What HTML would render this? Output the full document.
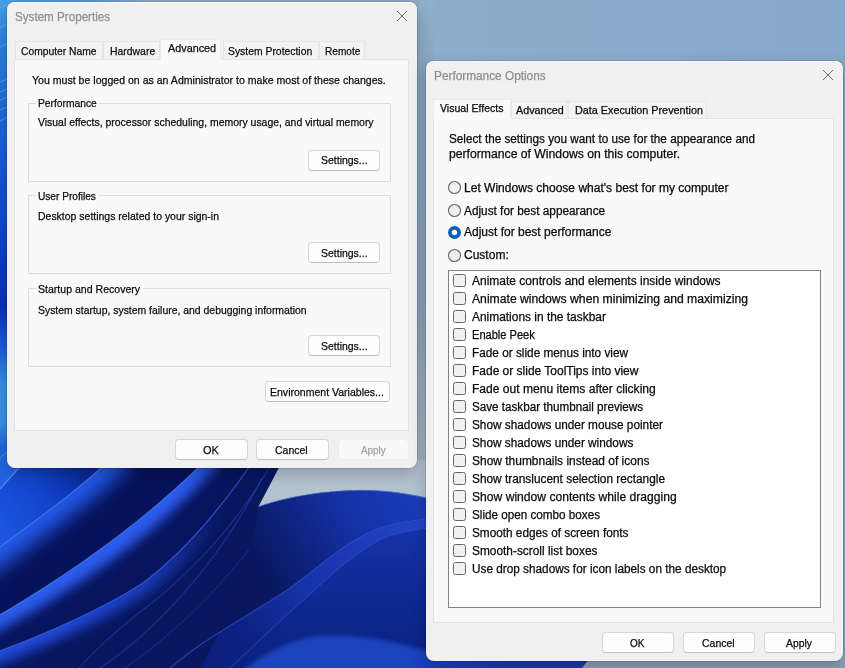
<!DOCTYPE html>
<html><head><meta charset="utf-8"><style>
html,body{margin:0;padding:0;}
body{width:845px;height:668px;overflow:hidden;position:relative;font-family:"Liberation Sans",sans-serif;background:#8db2d2;}
.t{position:absolute;white-space:nowrap;-webkit-text-stroke:0.25px currentColor;}
.b{position:absolute;}
#wall{position:absolute;left:0;top:0;}
</style></head><body>
<svg id="wall" width="845" height="668" viewBox="0 0 845 668">
<defs>
<linearGradient id="sky" x1="0" y1="0" x2="1" y2="0"><stop offset="0" stop-color="#92b3d0"/><stop offset="1" stop-color="#86a9ca"/></linearGradient>
<linearGradient id="skyV" x1="0" y1="0" x2="0" y2="668" gradientUnits="userSpaceOnUse"><stop offset="0" stop-color="#8fb0cc"/><stop offset="0.12" stop-color="#88a6c2"/><stop offset="0.45" stop-color="#8ea6bd"/><stop offset="0.7" stop-color="#a8b8c8"/><stop offset="1" stop-color="#b4c2d0"/></linearGradient>
<linearGradient id="ls" x1="0" y1="0" x2="0" y2="480" gradientUnits="userSpaceOnUse">
 <stop offset="0" stop-color="#40a4ea"/><stop offset="0.1" stop-color="#2a80e0"/><stop offset="0.3" stop-color="#1a60d8"/>
 <stop offset="0.5" stop-color="#0f44cc"/><stop offset="0.64" stop-color="#0a30b4"/><stop offset="0.72" stop-color="#1a5cd8"/>
 <stop offset="0.8" stop-color="#3590e8"/><stop offset="0.88" stop-color="#3a92ea"/><stop offset="0.93" stop-color="#1e66dc"/><stop offset="1" stop-color="#2a70e0"/></linearGradient>
<linearGradient id="b2" x1="0" y1="530" x2="90" y2="468" gradientUnits="userSpaceOnUse"><stop offset="0" stop-color="#1a56de"/><stop offset="0.5" stop-color="#1244cc"/><stop offset="1" stop-color="#0a2590"/></linearGradient>
<linearGradient id="p1" x1="410" y1="495" x2="262" y2="575" gradientUnits="userSpaceOnUse"><stop offset="0" stop-color="#1a3cb8"/><stop offset="0.4" stop-color="#1430a4"/><stop offset="1" stop-color="#08175e"/></linearGradient>
<linearGradient id="p2" x1="400" y1="520" x2="250" y2="650" gradientUnits="userSpaceOnUse"><stop offset="0" stop-color="#2242c2"/><stop offset="0.6" stop-color="#1632a8"/><stop offset="1" stop-color="#0c2080"/></linearGradient>
<linearGradient id="p3" x1="400" y1="530" x2="400" y2="668" gradientUnits="userSpaceOnUse"><stop offset="0" stop-color="#1632a8"/><stop offset="0.5" stop-color="#0e2a92"/><stop offset="1" stop-color="#0a2080"/></linearGradient>
<filter id="bl9" x="-50%" y="-50%" width="200%" height="200%"><feGaussianBlur stdDeviation="9"/></filter>
<filter id="bl6" x="-50%" y="-50%" width="200%" height="200%"><feGaussianBlur stdDeviation="6"/></filter>
<filter id="bl2" x="-50%" y="-50%" width="200%" height="200%"><feGaussianBlur stdDeviation="2"/></filter>
<filter id="bl4" x="-50%" y="-50%" width="200%" height="200%"><feGaussianBlur stdDeviation="4"/></filter>
<filter id="bl10" x="-50%" y="-50%" width="200%" height="200%"><feGaussianBlur stdDeviation="10"/></filter>
<clipPath id="cR3"><path d="M110 460 H206 C170 496 110 550 0 615 V547 C36 520 72 495 110 460 Z"/></clipPath>
<clipPath id="cR4"><path d="M206 460 H254 C220 510 180 556 140 585 C100 610 50 632 0 651 V615 C110 550 170 496 206 460 Z"/></clipPath>
<clipPath id="cR5"><path d="M0 651 C50 632 100 610 140 585 C180 556 220 510 254 460 H270 C240 520 190 575 140 612 C115 632 95 650 79 668 H0 Z"/></clipPath>
<clipPath id="cP"><path d="M258.5 506.6 C292 495 335 488.5 378 490.7 C400 492 415 495 440 501 V668 H200 C230 620 250 560 258.5 506.6 Z"/></clipPath>
</defs>
<rect width="845" height="668" fill="url(#sky)"/>
<rect x="405" y="0" width="30" height="668" fill="url(#skyV)"/>
<rect x="0" y="0" width="14" height="480" fill="url(#ls)"/>
<linearGradient id="ts" x1="0" y1="0" x2="150" y2="0" gradientUnits="userSpaceOnUse"><stop offset="0" stop-color="#48a0e6"/><stop offset="0.6" stop-color="#5a9ad8"/><stop offset="1" stop-color="#8eaac6"/></linearGradient>
<rect x="0" y="0" width="420" height="6" fill="#8eaac6"/>
<rect x="0" y="0" width="150" height="6" fill="url(#ts)"/>
<g stroke="#7ab8f0" stroke-width="1" opacity="0.55" fill="none">
<path d="M0 8 L14 2"/><path d="M0 28 L14 20"/><path d="M0 47 L14 40"/><path d="M0 82 L14 76"/><path d="M0 92 L14 86"/><path d="M0 100 L14 95"/><path d="M0 110 L14 104"/><path d="M0 121 L14 114"/>
<path d="M0 458 L14 446"/>
</g>
<path d="M250 460 H440 V520 H250 Z" fill="#b4c2d0"/>
<!-- bottom-left base navy -->
<path d="M0 460 H283 L258.5 506.6 C292 495 335 488.5 378 490.7 C400 492 415 495 440 501 L440 668 H0 Z" fill="#08175e"/>
<path d="M0 460 H26 L0 489 Z" fill="#2064e4"/>
<path d="M26 460 H110 C72 495 36 520 0 547 V489 Z" fill="url(#b2)"/>
<g clip-path="url(#cR3)"><rect x="0" y="450" width="260" height="200" fill="#06125a"/>
 <path d="M-20 562 C36 520 72 495 120 452" stroke="#2458e8" stroke-width="34" fill="none" filter="url(#bl9)"/></g>
<g clip-path="url(#cR4)"><rect x="0" y="450" width="280" height="230" fill="#07145e"/>
 <path d="M-20 626 C110 556 170 500 212 452" stroke="#2a5cec" stroke-width="26" fill="none" filter="url(#bl6)"/></g>
<g clip-path="url(#cR5)"><rect x="0" y="450" width="280" height="230" fill="#08165e"/>
 <linearGradient id="e4g" x1="60" y1="630" x2="220" y2="510" gradientUnits="userSpaceOnUse"><stop offset="0" stop-color="#2048d8"/><stop offset="0.5" stop-color="#2048d8" stop-opacity="0.7"/><stop offset="1" stop-color="#2048d8" stop-opacity="0"/></linearGradient>
 <path d="M-20 660 C50 632 100 610 140 585 C180 556 220 510 256 456" stroke="url(#e4g)" stroke-width="22" fill="none" filter="url(#bl6)"/></g>
<!-- lower-left lighter region -->
<!-- highlight lines -->
<path d="M0 489 L26 460" stroke="#5a9af0" stroke-width="1.2" fill="none" opacity="0.8"/>
<path d="M0 547 C36 520 72 495 110 460" stroke="#4a82f0" stroke-width="1.2" fill="none" opacity="0.8"/>
<path d="M0 615 C110 550 170 496 206 460" stroke="#4a7cf0" stroke-width="1.2" fill="none" opacity="0.8"/>
<path d="M0 651 C50 632 100 610 140 585 C180 556 220 510 254 460" stroke="#3a60e0" stroke-width="1.2" fill="none" opacity="0.8"/>
<path d="M79 668 C95 650 115 632 140 612 C190 575 240 520 270 466" stroke="#2448c8" stroke-width="1" fill="none" opacity="0.7"/>
<path d="M125 668 C180 630 240 570 284 500" stroke="#2040c0" stroke-width="1" fill="none" opacity="0.6"/>
<path d="M100 668 C150 635 215 570 262 478" stroke="#2444c4" stroke-width="1.2" fill="none" opacity="0.55"/>
<!-- petal 1 -->
<g clip-path="url(#cP)">
<rect x="190" y="480" width="260" height="200" fill="url(#p1)"/>
<!-- petal 2 band -->
<path d="M170 668 C180 660 190 652 200 645 C230 625 265 605 290 588 C315 570 335 552 350 543 C365 534 375 529 386 526 C400 522 415 520 440 518 V668 Z" fill="url(#p2)"/>
<path d="M230 668 C255 645 275 625 290 612 C310 595 330 575 344 564 C360 552 372 543 386 537 C400 532 415 529 440 527 V668 Z" fill="url(#p3)"/>
<path d="M245 668 C270 650 295 638 320 636 C360 633 400 642 440 655 V672 H245 Z" fill="#1a42bc" filter="url(#bl2)"/>
</g>
<path d="M258.5 506.6 C292 495 335 488.5 378 490.7 C400 492 415 495 440 501" stroke="#6a88d8" stroke-width="1.2" fill="none" opacity="0.6"/>
<path d="M170 668 C180 660 190 652 200 645 C230 625 265 605 290 588 C315 570 335 552 350 543 C365 534 375 529 386 526 C400 522 415 520 440 518" stroke="#3050cc" stroke-width="1.2" fill="none" opacity="0.7"/>
<path d="M230 668 C255 645 275 625 290 612 C310 595 330 575 344 564 C360 552 372 543 386 537 C400 532 415 529 440 527" stroke="#3656d4" stroke-width="1" fill="none" opacity="0.6"/>
<!-- bottom strip under right window -->
<rect x="560" y="640" width="285" height="28" fill="#8aa0b8"/>
<rect x="840" y="60" width="5" height="608" fill="#8ea4ba"/>
<linearGradient id="bs" x1="425" y1="0" x2="585" y2="0" gradientUnits="userSpaceOnUse"><stop offset="0" stop-color="#1a40c0"/><stop offset="0.5" stop-color="#1a3ab0"/><stop offset="1" stop-color="#1a3aa8"/></linearGradient>
<path d="M420 655 H592 L582 668 H420 Z" fill="url(#bs)"/>
</svg>

<div class="b" style="left:7px;top:2px;width:410.00px;height:466.00px;background:#f0f0f0;border-radius:8px;box-shadow:inset 0 1px 0 rgba(255,255,255,0.9),0 0 0 1px rgba(0,0,0,0.10),0 6px 16px rgba(0,0,0,0.22);"></div>
<div class="t" style="left:15.35px;top:7.81px;font-size:12.5px;line-height:18px;color:#8e8e8e;letter-spacing:0.000px;transform:scaleX(0.9312);transform-origin:0 0">System Properties</div>
<svg class="b" style="left:396px;top:10px" width="12" height="12"><path d="M1 1L11 11M11 1L1 11" stroke="#6e6e6e" stroke-width="1"/></svg>
<div class="b" style="left:15px;top:41px;width:88.00px;height:19.00px;background:#f3f3f3;border:1px solid #e5e5e5;border-bottom:none;box-sizing:border-box;"></div>
<div class="t" style="left:20.82px;top:42.75px;font-size:11.75px;line-height:16px;color:#0a0a0a;letter-spacing:0.000px;transform:scaleX(0.8763);transform-origin:0 0">Computer Name</div>
<div class="b" style="left:103px;top:41px;width:57.00px;height:19.00px;background:#f3f3f3;border:1px solid #e5e5e5;border-bottom:none;box-sizing:border-box;"></div>
<div class="t" style="left:109.50px;top:42.75px;font-size:11.75px;line-height:16px;color:#0a0a0a;letter-spacing:0.000px;transform:scaleX(0.8869);transform-origin:0 0">Hardware</div>
<div class="b" style="left:223px;top:41px;width:95.50px;height:19.00px;background:#f3f3f3;border:1px solid #e5e5e5;border-bottom:none;box-sizing:border-box;"></div>
<div class="t" style="left:228.00px;top:42.75px;font-size:11.75px;line-height:16px;color:#0a0a0a;letter-spacing:0.000px;transform:scaleX(0.8831);transform-origin:0 0">System Protection</div>
<div class="b" style="left:318.5px;top:41px;width:46.50px;height:19.00px;background:#f3f3f3;border:1px solid #e5e5e5;border-bottom:none;box-sizing:border-box;"></div>
<div class="t" style="left:325.36px;top:42.75px;font-size:11.75px;line-height:16px;color:#0a0a0a;letter-spacing:0.000px;transform:scaleX(0.8601);transform-origin:0 0">Remote</div>
<div class="b" style="left:14px;top:59px;width:395.00px;height:372.00px;background:#f9f9f9;border:1px solid #e3e3e3;box-sizing:border-box;"></div>
<div class="b" style="left:160px;top:39px;width:61.00px;height:21.00px;background:#f9f9f9;border:1px solid #ebebeb;border-bottom:none;box-sizing:border-box;"></div>
<div class="t" style="left:167.50px;top:40.43px;font-size:11.75px;line-height:16px;color:#0a0a0a;letter-spacing:0.000px;transform:scaleX(0.9205);transform-origin:0 0">Advanced</div>
<div class="t" style="left:32.36px;top:72.29px;font-size:11.75px;line-height:16px;color:#0a0a0a;letter-spacing:0.000px;transform:scaleX(0.8992);transform-origin:0 0">You must be logged on as an Administrator to make most of these changes.</div>
<div class="b" style="left:28px;top:103px;width:363.00px;height:79.00px;border:1px solid #dcdcdc;box-sizing:border-box;border-radius:1px;"></div>
<div class="t" style="left:37.64px;top:95.43px;font-size:11.75px;line-height:16px;color:#0a0a0a;letter-spacing:0.000px;transform:scaleX(0.8733);transform-origin:0 0"><span style="background:#f9f9f9;padding:0 3px 0 2px;margin-left:-2px">Performance</span></div>
<div class="t" style="left:38.32px;top:114.43px;font-size:11.75px;line-height:16px;color:#0a0a0a;letter-spacing:0.000px;transform:scaleX(0.8885);transform-origin:0 0">Visual effects, processor scheduling, memory usage, and virtual memory</div>
<div class="b" style="left:308.3px;top:150.1px;width:71.30px;height:21.00px;background:#fdfdfd;border:1px solid #d6d6d6;border-bottom-color:#bdbdbd;border-radius:4px;box-sizing:border-box;"></div>
<div class="t" style="left:320.64px;top:152.29px;font-size:11.75px;line-height:16px;color:#0a0a0a;letter-spacing:0.000px;transform:scaleX(0.8915);transform-origin:0 0">Settings...</div>
<div class="b" style="left:28px;top:195px;width:363.00px;height:79.00px;border:1px solid #dcdcdc;box-sizing:border-box;border-radius:1px;"></div>
<div class="t" style="left:37.82px;top:188.25px;font-size:11.75px;line-height:16px;color:#0a0a0a;letter-spacing:0.000px;transform:scaleX(0.8605);transform-origin:0 0"><span style="background:#f9f9f9;padding:0 3px 0 2px;margin-left:-2px">User Profiles</span></div>
<div class="t" style="left:38.18px;top:208.11px;font-size:11.75px;line-height:16px;color:#0a0a0a;letter-spacing:0.000px;transform:scaleX(0.8911);transform-origin:0 0">Desktop settings related to your sign-in</div>
<div class="b" style="left:308.3px;top:242.1px;width:71.30px;height:21.00px;background:#fdfdfd;border:1px solid #d6d6d6;border-bottom-color:#bdbdbd;border-radius:4px;box-sizing:border-box;"></div>
<div class="t" style="left:320.64px;top:244.61px;font-size:11.75px;line-height:16px;color:#0a0a0a;letter-spacing:0.000px;transform:scaleX(0.8915);transform-origin:0 0">Settings...</div>
<div class="b" style="left:28px;top:288px;width:363.00px;height:79.00px;border:1px solid #dcdcdc;box-sizing:border-box;border-radius:1px;"></div>
<div class="t" style="left:37.82px;top:281.11px;font-size:11.75px;line-height:16px;color:#0a0a0a;letter-spacing:0.000px;transform:scaleX(0.8983);transform-origin:0 0"><span style="background:#f9f9f9;padding:0 3px 0 2px;margin-left:-2px">Startup and Recovery</span></div>
<div class="t" style="left:38.18px;top:301.57px;font-size:11.75px;line-height:16px;color:#0a0a0a;letter-spacing:0.000px;transform:scaleX(0.8864);transform-origin:0 0">System startup, system failure, and debugging information</div>
<div class="b" style="left:308.3px;top:335.1px;width:71.30px;height:21.00px;background:#fdfdfd;border:1px solid #d6d6d6;border-bottom-color:#bdbdbd;border-radius:4px;box-sizing:border-box;"></div>
<div class="t" style="left:320.64px;top:337.93px;font-size:11.75px;line-height:16px;color:#0a0a0a;letter-spacing:0.000px;transform:scaleX(0.8915);transform-origin:0 0">Settings...</div>
<div class="b" style="left:264.6px;top:381.2px;width:125.20px;height:21.00px;background:#fdfdfd;border:1px solid #d6d6d6;border-bottom-color:#bdbdbd;border-radius:4px;box-sizing:border-box;"></div>
<div class="t" style="left:270.00px;top:384.25px;font-size:11.75px;line-height:16px;color:#0a0a0a;letter-spacing:0.000px;transform:scaleX(0.8957);transform-origin:0 0">Environment Variables...</div>
<div class="b" style="left:175px;top:439px;width:72.60px;height:21.00px;background:#fdfdfd;border:1px solid #d6d6d6;border-bottom-color:#bdbdbd;border-radius:4px;box-sizing:border-box;"></div>
<div class="t" style="left:203.32px;top:441.79px;font-size:11.75px;line-height:16px;color:#0a0a0a;letter-spacing:0.000px;transform:scaleX(0.9355);transform-origin:0 0">OK</div>
<div class="b" style="left:256.4px;top:439px;width:72.20px;height:21.00px;background:#fdfdfd;border:1px solid #d6d6d6;border-bottom-color:#bdbdbd;border-radius:4px;box-sizing:border-box;"></div>
<div class="t" style="left:275.36px;top:442.39px;font-size:11.75px;line-height:16px;color:#0a0a0a;letter-spacing:0.000px;transform:scaleX(0.8915);transform-origin:0 0">Cancel</div>
<div class="b" style="left:337.5px;top:439px;width:71.00px;height:21.00px;background:#f9f9f9;border:1px solid #ededed;border-radius:4px;box-sizing:border-box;"></div>
<div class="t" style="left:360.64px;top:441.79px;font-size:11.75px;line-height:16px;color:#a0a0a0;letter-spacing:0.000px;transform:scaleX(0.8394);transform-origin:0 0">Apply</div>
<div class="b" style="left:426px;top:61px;width:417.00px;height:600.00px;background:#f0f0f0;border-radius:8px;box-shadow:inset 0 1px 0 rgba(255,255,255,0.9),0 0 0 1px rgba(0,0,0,0.10),0 6px 16px rgba(0,0,0,0.22);"></div>
<div class="t" style="left:433.62px;top:67.68px;font-size:12.25px;line-height:17px;color:#8e8e8e;letter-spacing:0.000px;transform:scaleX(0.9648);transform-origin:0 0">Performance Options</div>
<svg class="b" style="left:822px;top:69px" width="12" height="12"><path d="M1 1L11 11M11 1L1 11" stroke="#6e6e6e" stroke-width="1"/></svg>
<div class="b" style="left:511px;top:101px;width:57.40px;height:18.00px;background:#f3f3f3;border:1px solid #e5e5e5;border-bottom:none;box-sizing:border-box;"></div>
<div class="t" style="left:515.54px;top:102.69px;font-size:11px;line-height:15px;color:#0a0a0a;letter-spacing:0.000px;transform:scaleX(0.9767);transform-origin:0 0">Advanced</div>
<div class="b" style="left:568.4px;top:101px;width:139.00px;height:18.00px;background:#f3f3f3;border:1px solid #e5e5e5;border-bottom:none;box-sizing:border-box;"></div>
<div class="t" style="left:575.18px;top:102.69px;font-size:11px;line-height:15px;color:#0a0a0a;letter-spacing:0.000px;transform:scaleX(0.9827);transform-origin:0 0">Data Execution Prevention</div>
<div class="b" style="left:433px;top:118.3px;width:401.00px;height:505.00px;background:#f9f9f9;border:1px solid #e3e3e3;box-sizing:border-box;"></div>
<div class="b" style="left:433px;top:99px;width:78.00px;height:20.30px;background:#f9f9f9;border:1px solid #ebebeb;border-bottom:none;box-sizing:border-box;"></div>
<div class="t" style="left:439.82px;top:100.83px;font-size:11px;line-height:15px;color:#0a0a0a;letter-spacing:0.000px;transform:scaleX(0.9587);transform-origin:0 0">Visual Effects</div>
<div class="t" style="left:448.64px;top:131.26px;font-size:12px;line-height:17px;color:#0a0a0a;letter-spacing:0.000px;transform:scaleX(0.9780);transform-origin:0 0">Select the settings you want to use for the appearance and</div>
<div class="t" style="left:448.64px;top:146.40px;font-size:12px;line-height:17px;color:#0a0a0a;letter-spacing:0.000px;transform:scaleX(1.0158);transform-origin:0 0">performance of Windows on this computer.</div>
<svg class="b" style="left:447px;top:180.0px" width="15" height="15"><circle cx="7.5" cy="7.5" r="6" fill="#f0f0f0" stroke="#666666" stroke-width="1.1"/></svg>
<div class="t" style="left:464.36px;top:179.76px;font-size:12px;line-height:17px;color:#0a0a0a;letter-spacing:0.000px;transform:scaleX(1.0029);transform-origin:0 0">Let Windows choose what's best for my computer</div>
<svg class="b" style="left:447px;top:203.0px" width="15" height="15"><circle cx="7.5" cy="7.5" r="6" fill="#f0f0f0" stroke="#666666" stroke-width="1.1"/></svg>
<div class="t" style="left:464.36px;top:202.76px;font-size:12px;line-height:17px;color:#0a0a0a;letter-spacing:0.000px;transform:scaleX(0.9840);transform-origin:0 0">Adjust for best appearance</div>
<svg class="b" style="left:447px;top:225.0px" width="15" height="15"><circle cx="7.5" cy="7.5" r="6.5" fill="#0a5fb4"/><circle cx="7.5" cy="7.5" r="2.7" fill="#fff"/></svg>
<div class="t" style="left:464.36px;top:224.44px;font-size:12px;line-height:17px;color:#0a0a0a;letter-spacing:0.000px;transform:scaleX(0.9999);transform-origin:0 0">Adjust for best performance</div>
<svg class="b" style="left:447px;top:247.9px" width="15" height="15"><circle cx="7.5" cy="7.5" r="6" fill="#f0f0f0" stroke="#666666" stroke-width="1.1"/></svg>
<div class="t" style="left:464.36px;top:247.30px;font-size:12px;line-height:17px;color:#0a0a0a;letter-spacing:0.000px;transform:scaleX(1.0015);transform-origin:0 0">Custom:</div>
<div class="b" style="left:448.3px;top:270.2px;width:372.50px;height:337.80px;background:#fff;border:1px solid #828282;box-sizing:border-box;"></div>
<div class="b" style="left:453.4px;top:274.3px;width:12.60px;height:12.30px;background:#f0f0f0;border:1px solid #666666;border-radius:2.5px;box-sizing:border-box;"></div>
<div class="t" style="left:471.50px;top:273.24px;font-size:12px;line-height:17px;color:#0a0a0a;letter-spacing:0.000px;transform:scaleX(0.9993);transform-origin:0 0">Animate controls and elements inside windows</div>
<div class="b" style="left:453.4px;top:292.3px;width:12.60px;height:12.30px;background:#f0f0f0;border:1px solid #666666;border-radius:2.5px;box-sizing:border-box;"></div>
<div class="t" style="left:471.50px;top:291.24px;font-size:12px;line-height:17px;color:#0a0a0a;letter-spacing:0.000px;transform:scaleX(1.0142);transform-origin:0 0">Animate windows when minimizing and maximizing</div>
<div class="b" style="left:453.4px;top:310.3px;width:12.60px;height:12.30px;background:#f0f0f0;border:1px solid #666666;border-radius:2.5px;box-sizing:border-box;"></div>
<div class="t" style="left:471.50px;top:309.24px;font-size:12px;line-height:17px;color:#0a0a0a;letter-spacing:0.000px;transform:scaleX(0.9939);transform-origin:0 0">Animations in the taskbar</div>
<div class="b" style="left:453.4px;top:328.3px;width:12.60px;height:12.30px;background:#f0f0f0;border:1px solid #666666;border-radius:2.5px;box-sizing:border-box;"></div>
<div class="t" style="left:471.50px;top:327.24px;font-size:12px;line-height:17px;color:#0a0a0a;letter-spacing:0.000px;transform:scaleX(0.9229);transform-origin:0 0">Enable Peek</div>
<div class="b" style="left:453.4px;top:346.3px;width:12.60px;height:12.30px;background:#f0f0f0;border:1px solid #666666;border-radius:2.5px;box-sizing:border-box;"></div>
<div class="t" style="left:471.50px;top:345.24px;font-size:12px;line-height:17px;color:#0a0a0a;letter-spacing:0.000px;transform:scaleX(0.9830);transform-origin:0 0">Fade or slide menus into view</div>
<div class="b" style="left:453.4px;top:364.3px;width:12.60px;height:12.30px;background:#f0f0f0;border:1px solid #666666;border-radius:2.5px;box-sizing:border-box;"></div>
<div class="t" style="left:471.50px;top:363.24px;font-size:12px;line-height:17px;color:#0a0a0a;letter-spacing:0.000px;transform:scaleX(0.9979);transform-origin:0 0">Fade or slide ToolTips into view</div>
<div class="b" style="left:453.4px;top:382.3px;width:12.60px;height:12.30px;background:#f0f0f0;border:1px solid #666666;border-radius:2.5px;box-sizing:border-box;"></div>
<div class="t" style="left:471.50px;top:381.24px;font-size:12px;line-height:17px;color:#0a0a0a;letter-spacing:0.000px;transform:scaleX(1.0055);transform-origin:0 0">Fade out menu items after clicking</div>
<div class="b" style="left:453.4px;top:400.3px;width:12.60px;height:12.30px;background:#f0f0f0;border:1px solid #666666;border-radius:2.5px;box-sizing:border-box;"></div>
<div class="t" style="left:471.50px;top:399.24px;font-size:12px;line-height:17px;color:#0a0a0a;letter-spacing:0.000px;transform:scaleX(0.9717);transform-origin:0 0">Save taskbar thumbnail previews</div>
<div class="b" style="left:453.4px;top:418.3px;width:12.60px;height:12.30px;background:#f0f0f0;border:1px solid #666666;border-radius:2.5px;box-sizing:border-box;"></div>
<div class="t" style="left:471.50px;top:417.24px;font-size:12px;line-height:17px;color:#0a0a0a;letter-spacing:0.000px;transform:scaleX(0.9835);transform-origin:0 0">Show shadows under mouse pointer</div>
<div class="b" style="left:453.4px;top:436.3px;width:12.60px;height:12.30px;background:#f0f0f0;border:1px solid #666666;border-radius:2.5px;box-sizing:border-box;"></div>
<div class="t" style="left:471.50px;top:435.24px;font-size:12px;line-height:17px;color:#0a0a0a;letter-spacing:0.000px;transform:scaleX(0.9832);transform-origin:0 0">Show shadows under windows</div>
<div class="b" style="left:453.4px;top:454.3px;width:12.60px;height:12.30px;background:#f0f0f0;border:1px solid #666666;border-radius:2.5px;box-sizing:border-box;"></div>
<div class="t" style="left:471.50px;top:453.24px;font-size:12px;line-height:17px;color:#0a0a0a;letter-spacing:0.000px;transform:scaleX(0.9969);transform-origin:0 0">Show thumbnails instead of icons</div>
<div class="b" style="left:453.4px;top:472.3px;width:12.60px;height:12.30px;background:#f0f0f0;border:1px solid #666666;border-radius:2.5px;box-sizing:border-box;"></div>
<div class="t" style="left:471.50px;top:471.24px;font-size:12px;line-height:17px;color:#0a0a0a;letter-spacing:0.000px;transform:scaleX(0.9876);transform-origin:0 0">Show translucent selection rectangle</div>
<div class="b" style="left:453.4px;top:490.3px;width:12.60px;height:12.30px;background:#f0f0f0;border:1px solid #666666;border-radius:2.5px;box-sizing:border-box;"></div>
<div class="t" style="left:471.50px;top:489.24px;font-size:12px;line-height:17px;color:#0a0a0a;letter-spacing:0.000px;transform:scaleX(1.0090);transform-origin:0 0">Show window contents while dragging</div>
<div class="b" style="left:453.4px;top:508.3px;width:12.60px;height:12.30px;background:#f0f0f0;border:1px solid #666666;border-radius:2.5px;box-sizing:border-box;"></div>
<div class="t" style="left:471.50px;top:507.24px;font-size:12px;line-height:17px;color:#0a0a0a;letter-spacing:0.000px;transform:scaleX(0.9743);transform-origin:0 0">Slide open combo boxes</div>
<div class="b" style="left:453.4px;top:526.3px;width:12.60px;height:12.30px;background:#f0f0f0;border:1px solid #666666;border-radius:2.5px;box-sizing:border-box;"></div>
<div class="t" style="left:471.50px;top:525.24px;font-size:12px;line-height:17px;color:#0a0a0a;letter-spacing:0.000px;transform:scaleX(0.9811);transform-origin:0 0">Smooth edges of screen fonts</div>
<div class="b" style="left:453.4px;top:544.3px;width:12.60px;height:12.30px;background:#f0f0f0;border:1px solid #666666;border-radius:2.5px;box-sizing:border-box;"></div>
<div class="t" style="left:471.50px;top:543.24px;font-size:12px;line-height:17px;color:#0a0a0a;letter-spacing:0.000px;transform:scaleX(0.9902);transform-origin:0 0">Smooth-scroll list boxes</div>
<div class="b" style="left:453.4px;top:562.3px;width:12.60px;height:12.30px;background:#f0f0f0;border:1px solid #666666;border-radius:2.5px;box-sizing:border-box;"></div>
<div class="t" style="left:471.50px;top:561.24px;font-size:12px;line-height:17px;color:#0a0a0a;letter-spacing:0.000px;transform:scaleX(0.9820);transform-origin:0 0">Use drop shadows for icon labels on the desktop</div>
<div class="b" style="left:602.3px;top:632px;width:71.70px;height:21.00px;background:#fdfdfd;border:1px solid #d6d6d6;border-bottom-color:#bdbdbd;border-radius:4px;box-sizing:border-box;"></div>
<div class="t" style="left:629.68px;top:635.02px;font-size:11.5px;line-height:16px;color:#0a0a0a;letter-spacing:0.000px;transform:scaleX(0.8655);transform-origin:0 0">OK</div>
<div class="b" style="left:682.9px;top:632px;width:71.70px;height:21.00px;background:#fdfdfd;border:1px solid #d6d6d6;border-bottom-color:#bdbdbd;border-radius:4px;box-sizing:border-box;"></div>
<div class="t" style="left:701.64px;top:635.02px;font-size:11.5px;line-height:16px;color:#0a0a0a;letter-spacing:0.000px;transform:scaleX(0.9115);transform-origin:0 0">Cancel</div>
<div class="b" style="left:763.6px;top:632px;width:72.10px;height:21.00px;background:#fdfdfd;border:1px solid #d6d6d6;border-bottom-color:#bdbdbd;border-radius:4px;box-sizing:border-box;"></div>
<div class="t" style="left:786.00px;top:635.02px;font-size:11.5px;line-height:16px;color:#0a0a0a;letter-spacing:0.000px;transform:scaleX(0.9027);transform-origin:0 0">Apply</div>
</body></html>
